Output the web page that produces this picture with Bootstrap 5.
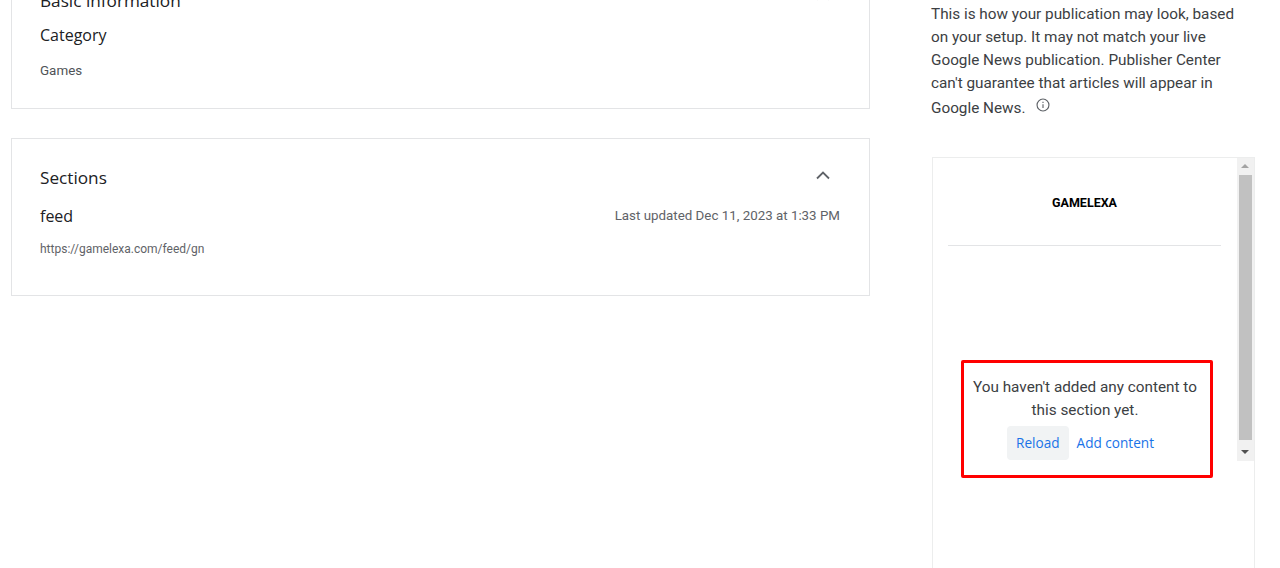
<!DOCTYPE html>
<html lang="en">
<head>
<meta charset="utf-8">
<title>Publication preview</title>
<link href="https://cdn.jsdelivr.net/npm/bootstrap@5.3.0/dist/css/bootstrap.min.css" rel="stylesheet">
<style>
html,body{height:568px;overflow:hidden;background:#fff}
body{font-family:Roboto,"Liberation Sans",sans-serif;color:#3c4043}
.stage{margin-top:-40px;padding-left:11px;gap:61px;height:608px}
.main-col{width:859px;flex:none;gap:29px}
.panel{border:1px solid #e3e4e6;padding:0 29px 0 28px}
.panel-one{height:149px;padding-top:28px}
.panel-two{height:158px;padding-top:27px}
.head-title{font-family:"Open Sans","Noto Sans",sans-serif;font-size:17.2px;line-height:24px;color:#202124;margin:0}
.sub-title{font-family:"Open Sans","Noto Sans",sans-serif;font-size:16px;line-height:20px;color:#202124;margin:0}
.cat-title{margin-top:12px}
.cat-value{font-size:13.4px;line-height:20px;margin-top:16px;color:#505357}
.chev{width:16px;height:10px;color:#5f6368;flex:none}
.chev-pos{margin-right:9px;margin-top:4px}
.chev-hi{margin-top:2px}
.feed-row{margin-top:16px}
.updated{font-size:13.35px;line-height:20px;color:#5f6368}
.feed-url{font-size:12px;line-height:16px;margin-top:15px;color:#5f6368}
.side-col{width:324px;flex:none;padding-top:43px}
.intro{font-size:15.3px;line-height:23px;margin:0;color:#3c4043}
.intro-last{display:inline-block;padding-top:2px}
.info-ic{width:14px;height:14px;margin-left:7px;vertical-align:1px;color:#5f6368}
.preview{margin-top:37px;margin-left:1px;width:323px;height:500px;border:1px solid #eceded;border-bottom:0;position:relative}
.pre-inner{width:304px;padding:0 16px 0 15px}
.brand{font-size:12.5px;line-height:16px;font-weight:700;color:#000;text-align:center;padding:37px 0 34px;border-bottom:1px solid #e3e4e6}
.empty{width:252px;margin:115px 0 0 26px;text-align:center;padding:15px 6px 0}
.empty-text{font-size:15.3px;line-height:23px;color:#3c4043}
.acts{margin-top:4px;margin-left:-1px}
.act-link{font-family:"Open Sans","Noto Sans",sans-serif;font-size:13.6px;line-height:20px;color:#1a73e8;padding:7px 9px;border-radius:4px;text-decoration:none;border:0;background:none}
.act-plain{padding-left:8px;padding-right:8px}
.act-on{background:#f1f3f4}
.red-mark{position:absolute;left:28px;top:202px;width:252px;height:118px;border:3px solid #f00;border-radius:2px;pointer-events:none}
.scroller{position:absolute;right:0;top:0;width:17px;height:303px;background:#f1f1f1}
.thumb{position:absolute;left:2px;top:17px;height:265px;background:#c1c1c1;width:13px}
.arr{position:absolute;left:4px;width:0;height:0;border-left:4px solid transparent;border-right:4px solid transparent}
.arr-up{top:6px;border-bottom:4px solid #a3a3a3}
.arr-down{bottom:7px;border-top:4px solid #505050}
</style>
</head>
<body>
<div class="stage d-flex align-items-start">
  <div class="main-col d-flex flex-column">
    <section class="panel panel-one">
      <div class="d-flex justify-content-between align-items-start">
        <h2 class="head-title">Basic information</h2>
        <svg class="chev chev-pos chev-hi" viewBox="0 0 16 10" fill="none" stroke="currentColor" stroke-width="1.8"><path d="M2 8.5 8 2.5l6 6"/></svg>
      </div>
      <h3 class="sub-title cat-title">Category</h3>
      <div class="cat-value">Games</div>
    </section>
    <section class="panel panel-two">
      <div class="d-flex justify-content-between align-items-start">
        <h2 class="head-title">Sections</h2>
        <svg class="chev chev-pos" viewBox="0 0 16 10" fill="none" stroke="currentColor" stroke-width="1.8"><path d="M2 8.5 8 2.5l6 6"/></svg>
      </div>
      <div class="feed-row d-flex justify-content-between align-items-start">
        <h3 class="sub-title">feed</h3>
        <div class="updated">Last updated Dec 11, 2023 at 1:33 PM</div>
      </div>
      <div class="feed-url">https://gamelexa.com/feed/gn</div>
    </section>
  </div>
  <aside class="side-col">
    <p class="intro">This is how your publication may look, based on your setup. It may not match your live Google News publication. Publisher Center can't guarantee that articles will appear in <span class="intro-last">Google News.</span> <svg class="info-ic" viewBox="0 0 16 16" fill="none" stroke="currentColor" stroke-width="1.3"><circle cx="8" cy="8" r="6.8"/><path d="M8 7.2v4.2M8 4.4v1.3"/></svg></p>
    <div class="preview">
      <div class="pre-inner">
        <div class="brand">GAMELEXA</div>
      </div>
      <div class="empty">
        <div class="empty-text">You haven't added any content to this section yet.</div>
        <div class="acts d-flex justify-content-center">
          <button type="button" class="act-link act-on">Reload</button>
          <button type="button" class="act-link act-plain">Add content</button>
        </div>
      </div>
      <div class="red-mark"></div>
      <div class="scroller">
        <span class="arr arr-up"></span>
        <div class="thumb"></div>
        <span class="arr arr-down"></span>
      </div>
    </div>
  </aside>
</div>
</body>
</html>
